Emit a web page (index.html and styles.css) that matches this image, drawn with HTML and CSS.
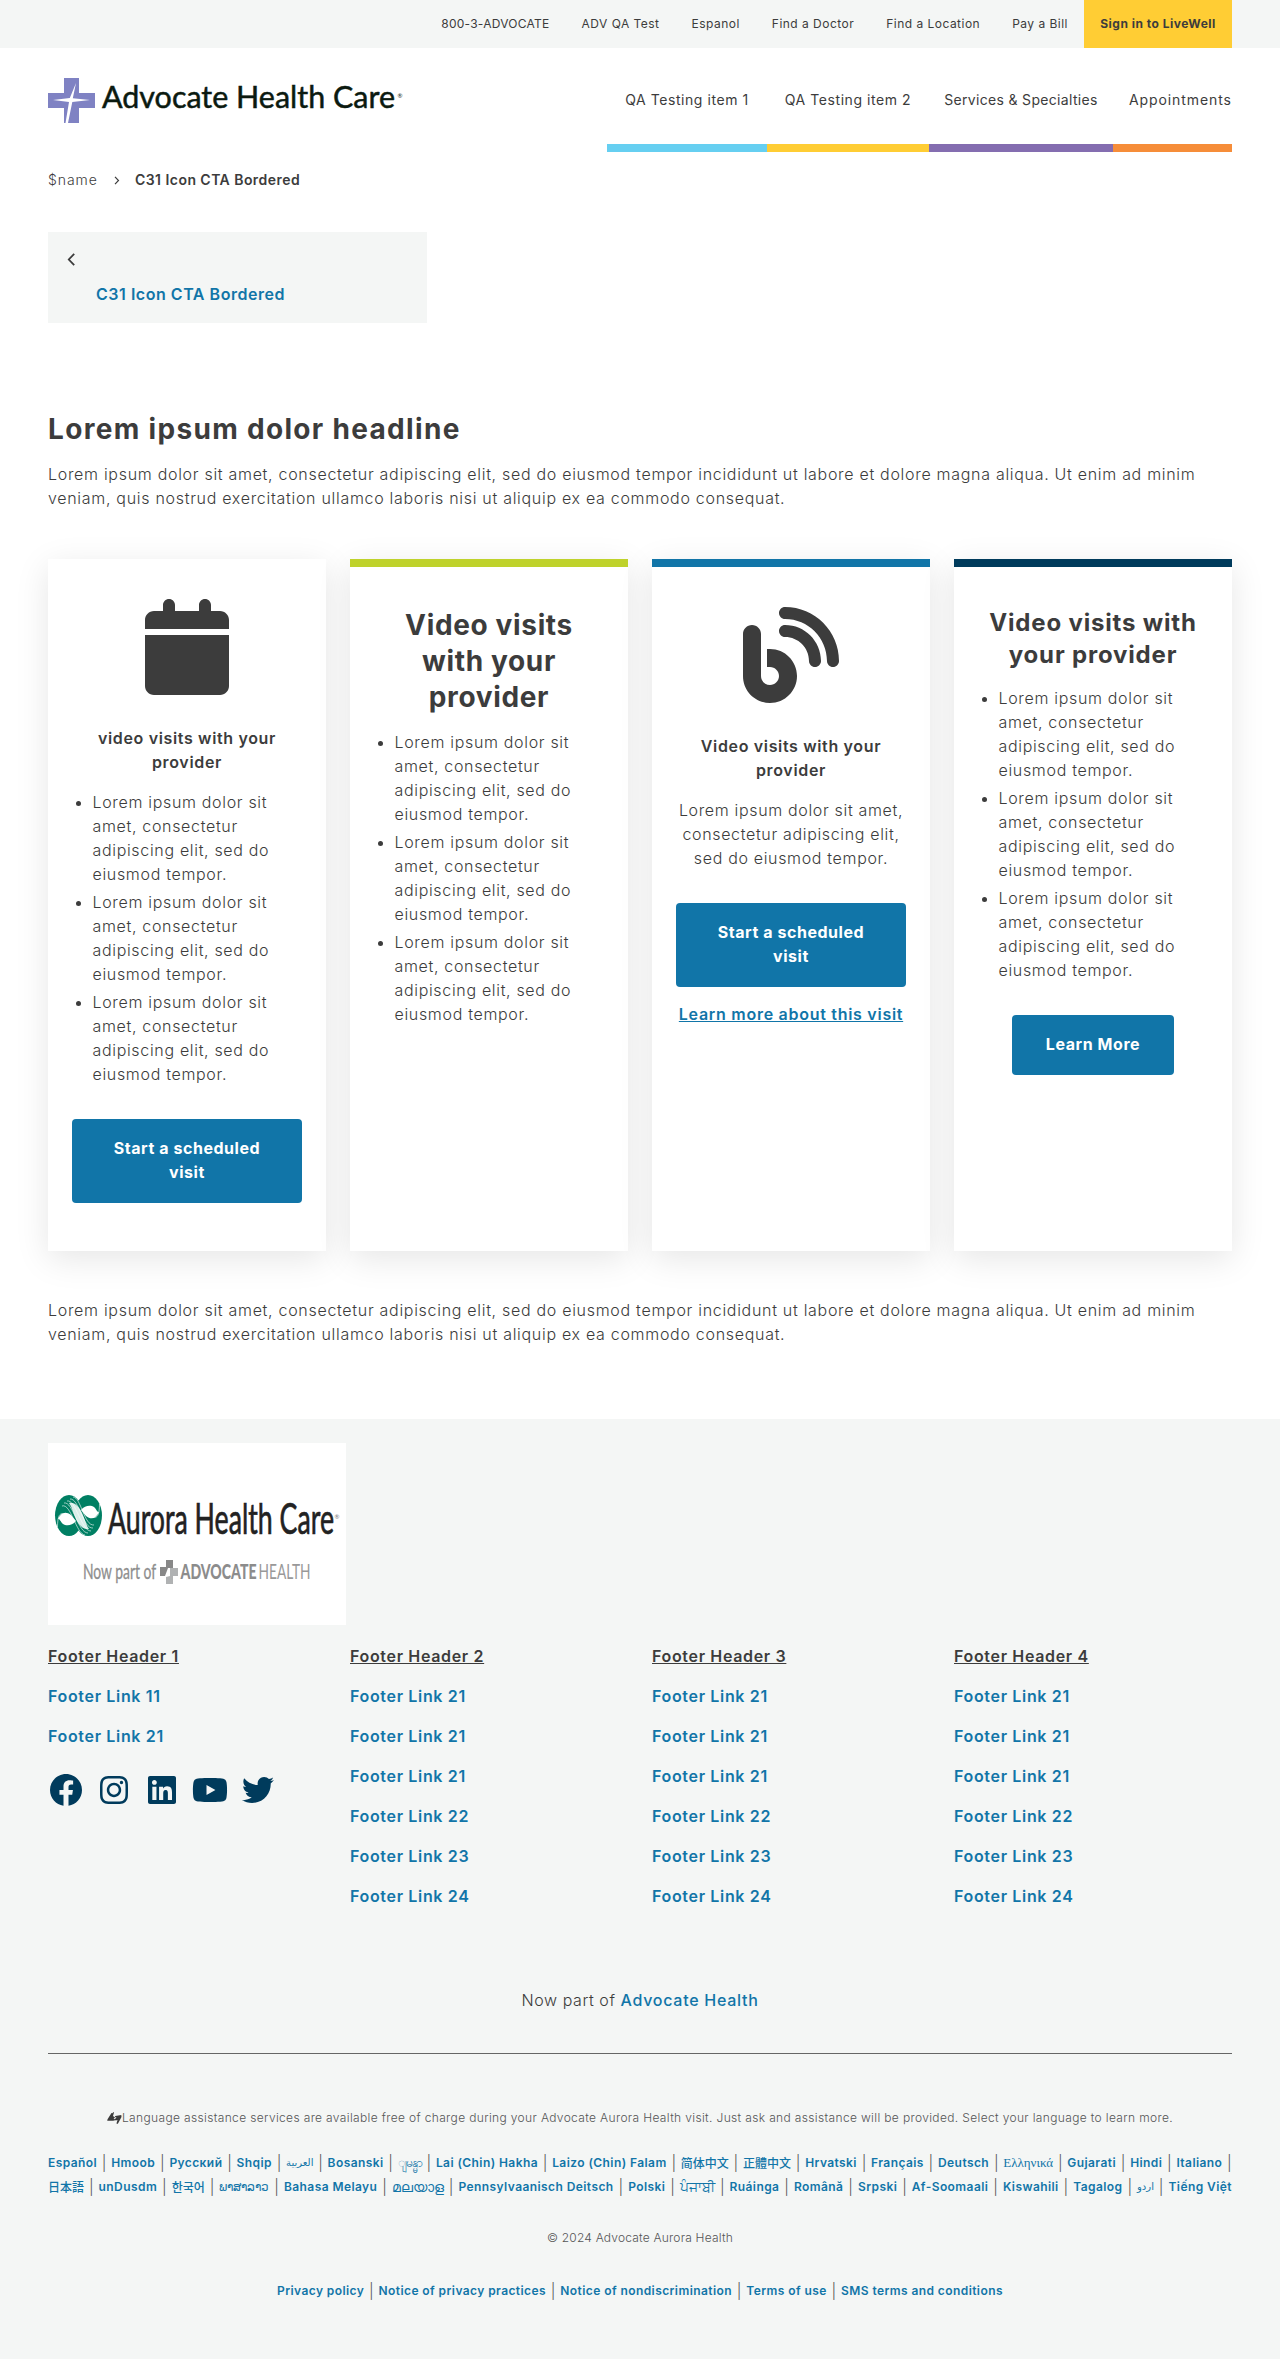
FILE: index.html
```
<!DOCTYPE html>
<html lang="en">
<head>
<meta charset="utf-8">
<title>C31 Icon CTA Bordered</title>
<link rel="stylesheet" href="styles.css">
</head>
<body>
<div class="topbar">
  <nav class="wrap topbar-links">
    <a class="phone">800-3-ADVOCATE</a><a class="wide">ADV QA Test</a><a class="wide">Espanol</a><a class="wide">Find a Doctor</a><a class="wide">Find a Location</a><a class="wide">Pay a Bill</a><a class="signin">Sign in to LiveWell</a>
  </nav>
</div>
<header class="wrap header">
  <svg class="logo" width="356" height="48" viewBox="0 0 356 48" role="img" aria-label="Advocate Health Care">
    <path fill="#7f82c3" d="M16 0h15v15h16v15H31v15H16V30H0V15h16z"/>
    <path fill="#fff" d="M28 5l-3.200 15.200L42 22l-17.700 2L20 45h-2.500l3.500-21L5 22l16.800-2z"/>
    <g fill="#0b1a10" font-family="Lato, sans-serif">
      <text x="54" y="30" font-size="31" stroke="#0b1a10" stroke-width=".5" textLength="293" lengthAdjust="spacingAndGlyphs">Advocate Health Care</text>
      <text x="349.500" y="20" font-size="6">®</text>
    </g>
  </svg>
  <nav class="mainnav">
    <a class="cyan">QA Testing item 1</a><a class="yellow">QA Testing item 2</a><a class="purple">Services &amp; Specialties</a><a class="orange">Appointments</a>
  </nav>
</header>
<main class="wrap">
  <div class="crumbs">
    <span>$name</span>
    <svg width="6" height="9" viewBox="0 0 6 9"><path d="M1 .8l3.500 3.700L1 8.200" fill="none" stroke="#3c3c3c" stroke-width="1.200"/></svg>
    <b>C31 Icon CTA Bordered</b>
  </div>
  <div class="sidenav">
    <svg width="9" height="13" viewBox="0 0 9 13"><path d="M7.200 .9L1.800 6.500l5.400 5.600" fill="none" stroke="#3c3c3c" stroke-width="1.800"/></svg>
    <a>C31 Icon CTA Bordered</a>
  </div>
  <h1>Lorem ipsum dolor headline</h1>
  <p class="intro">Lorem ipsum dolor sit amet, consectetur adipiscing elit, sed do eiusmod tempor incididunt ut labore et dolore magna aliqua. Ut enim ad minim veniam, quis nostrud exercitation ullamco laboris nisi ut aliquip ex ea commodo consequat.</p>
  <section class="cards">
    <article class="card">
      <svg class="card-icon" width="84" height="96" viewBox="0 0 448 512"><path d="M96 32V64H48C21.500 64 0 85.500 0 112v48H448V112c0-26.500-21.500-48-48-48H352V32c0-17.700-14.300-32-32-32s-32 14.300-32 32V64H160V32c0-17.700-14.300-32-32-32S96 14.300 96 32zM448 192H0V464c0 26.500 21.500 48 48 48H400c26.500 0 48-21.500 48-48V192z"/></svg>
      <h5>video visits with your provider</h5>
      <ul><li>Lorem ipsum dolor sit amet, consectetur adipiscing elit, sed do eiusmod tempor.</li><li>Lorem ipsum dolor sit amet, consectetur adipiscing elit, sed do eiusmod tempor.</li><li>Lorem ipsum dolor sit amet, consectetur adipiscing elit, sed do eiusmod tempor.</li></ul>
      <a class="btn">Start a scheduled visit</a>
    </article>
    <article class="card lime">
      <h2>Video visits with your provider</h2>
      <ul><li>Lorem ipsum dolor sit amet, consectetur adipiscing elit, sed do eiusmod tempor.</li><li>Lorem ipsum dolor sit amet, consectetur adipiscing elit, sed do eiusmod tempor.</li><li>Lorem ipsum dolor sit amet, consectetur adipiscing elit, sed do eiusmod tempor.</li></ul>
    </article>
    <article class="card blue">
      <svg class="card-icon" width="96" height="96" viewBox="0 0 512 512"><path d="M192 32c0 17.700 14.300 32 32 32c123.700 0 224 100.300 224 224c0 17.700 14.300 32 32 32s32-14.300 32-32C512 128.900 383.100 0 224 0c-17.700 0-32 14.300-32 32zm0 96c0 17.700 14.300 32 32 32c70.700 0 128 57.300 128 128c0 17.700 14.300 32 32 32s32-14.300 32-32c0-106-86-192-192-192c-17.700 0-32 14.300-32 32zM96 144c0-26.500-21.500-48-48-48S0 117.500 0 144V368c0 79.500 64.500 144 144 144s144-64.500 144-144s-64.500-144-144-144H128v96h16c26.500 0 48 21.500 48 48s-21.500 48-48 48s-48-21.500-48-48V144z"/></svg>
      <h5>Video visits with your provider</h5>
      <p>Lorem ipsum dolor sit amet, consectetur adipiscing elit, sed do eiusmod tempor.</p>
      <a class="btn">Start a scheduled visit</a>
      <a class="more">Learn more about this visit</a>
    </article>
    <article class="card navy">
      <h3>Video visits with your provider</h3>
      <ul><li>Lorem ipsum dolor sit amet, consectetur adipiscing elit, sed do eiusmod tempor.</li><li>Lorem ipsum dolor sit amet, consectetur adipiscing elit, sed do eiusmod tempor.</li><li>Lorem ipsum dolor sit amet, consectetur adipiscing elit, sed do eiusmod tempor.</li></ul>
      <a class="btn">Learn More</a>
    </article>
  </section>
  <p class="intro">Lorem ipsum dolor sit amet, consectetur adipiscing elit, sed do eiusmod tempor incididunt ut labore et dolore magna aliqua. Ut enim ad minim veniam, quis nostrud exercitation ullamco laboris nisi ut aliquip ex ea commodo consequat.</p>
</main>
<footer class="footer">
  <div class="wrap">
    <svg class="footer-logo" width="298" height="182" viewBox="0 0 298 182" role="img" aria-label="Aurora Health Care">
      <rect width="298" height="182" fill="#fff"/>
      <ellipse cx="21" cy="72.500" rx="14" ry="20.500" fill="#007f63"/>
      <ellipse cx="40" cy="72.500" rx="14" ry="20.500" fill="#007f63"/>
      <path fill="#fff" d="M10 76c3-7 8-8 13-4l5 6c-4 5-10 5-13 3-3-3-3-5-5-5z"/>
      <path fill="#fff" d="M51 69c-3 7-8 8-13 4l-5-6c4-5 10-5 13-3 3 3 3 5 5 5z"/>
      <path fill="#d9eee9" d="M21 60c6-1 10 4 13 10s4 12 7 16c-6 1-10-4-13-10s-4-12-7-16z"/>
      <g fill="none" stroke="#fff" stroke-width=".6">
        <path d="M16 60c9-2 14 30 24 30M19 58c9-2 14 30 24 30M22 56c9-1 13 30 23 29M25 54c8 0 11 29 21 28M14 63c9-3 14 28 23 29M9.500 84c0-14 4-15 8-12M51.500 61c0 14-4 15-8 12"/>
      </g>
      <g font-family="Lato, sans-serif">
        <text x="60" y="91" font-size="42" fill="#222" stroke="#222" stroke-width=".7" textLength="226" lengthAdjust="spacingAndGlyphs">Aurora Health Care</text>
        <text x="286.500" y="76" font-size="6" fill="#777">®</text>
        <text x="35" y="136" font-size="20.500" fill="#8e8e8e" stroke="#8e8e8e" stroke-width=".3" textLength="73" lengthAdjust="spacingAndGlyphs">Now part of</text>
        <text x="132.500" y="136" font-size="20.500" font-weight="900" fill="#8c8c8c" textLength="76" lengthAdjust="spacingAndGlyphs">ADVOCATE</text>
        <text x="210.500" y="136" font-size="20.500" fill="#999" textLength="52" lengthAdjust="spacingAndGlyphs">HEALTH</text>
      </g>
      <path fill="#888" d="M118 117h7v8h-5l-3 8h-5v-9h6z"/>
      <path fill="#b0b2b3" d="M122 125h8v8h-5v8h-7v-7l4-1z"/>
    </svg>
    <div class="footer-cols">
      <div>
        <h4>Footer Header 1</h4><a>Footer Link 11</a><a>Footer Link 21</a>
        <div class="social">
          <span><svg width="32" height="32" viewBox="8 8 496 496"><path d="M504 256C504 119 393 8 256 8S8 119 8 256c0 123.780 90.690 226.380 209.250 245V327.690h-63V256h63v-54.640c0-62.150 37-96.480 93.670-96.480 27.140 0 55.520 4.840 55.520 4.840v61h-31.280c-30.800 0-40.410 19.120-40.410 38.730V256h68.780l-11 71.690h-57.780V501C413.310 482.380 504 379.780 504 256z"/></svg></span>
          <span><svg width="28" height="32" viewBox="0 0 448 512"><path d="M224.100 141c-63.600 0-114.900 51.300-114.900 114.900s51.300 114.900 114.900 114.900S339 319.500 339 255.900 287.700 141 224.100 141zm0 189.600c-41.100 0-74.700-33.500-74.700-74.700s33.500-74.700 74.700-74.700 74.700 33.500 74.700 74.700-33.600 74.700-74.700 74.700zm146.400-194.300c0 14.900-12 26.800-26.800 26.800-14.900 0-26.800-12-26.800-26.800s12-26.800 26.800-26.800 26.800 12 26.800 26.800zm76.100 27.200c-1.700-35.900-9.900-67.700-36.200-93.900-26.200-26.200-58-34.400-93.900-36.200-37-2.100-147.900-2.100-184.900 0-35.800 1.700-67.600 9.900-93.900 36.100s-34.400 58-36.200 93.900c-2.100 37-2.100 147.900 0 184.900 1.700 35.900 9.900 67.700 36.200 93.900s58 34.400 93.900 36.200c37 2.100 147.900 2.100 184.900 0 35.900-1.700 67.700-9.900 93.900-36.200 26.200-26.200 34.400-58 36.200-93.900 2.100-37 2.100-147.800 0-184.800zM398.800 388c-7.800 19.600-22.900 34.700-42.600 42.600-29.500 11.700-99.500 9-132.100 9s-102.700 2.600-132.100-9c-19.600-7.800-34.700-22.900-42.600-42.600-11.700-29.500-9-99.500-9-132.100s-2.600-102.700 9-132.100c7.800-19.600 22.900-34.700 42.600-42.600 29.500-11.700 99.500-9 132.100-9s102.700-2.600 132.100 9c19.600 7.800 34.700 22.900 42.600 42.600 11.700 29.500 9 99.500 9 132.100s2.700 102.700-9 132.100z"/></svg></span>
          <span><svg width="28" height="32" viewBox="0 0 448 512"><path d="M416 32H31.900C14.300 32 0 46.500 0 64.300v383.400C0 465.500 14.300 480 31.900 480H416c17.600 0 32-14.500 32-32.300V64.300c0-17.800-14.400-32.300-32-32.300zM135.400 416H69V202.200h66.500V416zm-33.200-243c-21.300 0-38.500-17.300-38.500-38.500S80.900 96 102.200 96c21.200 0 38.500 17.300 38.500 38.500 0 21.300-17.200 38.500-38.500 38.500zm282.100 243h-66.400V312c0-24.800-.5-56.700-34.500-56.700-34.600 0-39.900 27-39.900 54.900V416h-66.400V202.200h63.700v29.200h.9c8.900-16.800 30.600-34.500 62.900-34.500 67.200 0 79.700 44.300 79.700 101.900V416z"/></svg></span>
          <span><svg width="36" height="32" viewBox="0 0 576 512"><path d="M549.655 124.083c-6.281-23.650-24.787-42.276-48.284-48.597C458.781 64 288 64 288 64S117.220 64 74.629 75.486c-23.497 6.322-42.003 24.947-48.284 48.597-11.412 42.867-11.412 132.305-11.412 132.305s0 89.438 11.412 132.305c6.281 23.650 24.787 41.500 48.284 47.821C117.220 448 288 448 288 448s170.780 0 213.371-11.486c23.497-6.321 42.003-24.171 48.284-47.821 11.412-42.867 11.412-132.305 11.412-132.305s0-89.438-11.412-132.305zm-317.510 213.508V175.185l142.739 81.205-142.739 81.201z"/></svg></span>
          <span><svg width="32" height="32" viewBox="0 0 512 512"><path d="M459.370 151.716c.325 4.548.325 9.097.325 13.645 0 138.720-105.583 298.558-298.558 298.558-59.452 0-114.680-17.219-161.137-47.106 8.447.974 16.568 1.299 25.340 1.299 49.055 0 94.213-16.568 130.274-44.832-46.132-.975-84.792-31.188-98.112-72.772 6.498.974 12.995 1.624 19.818 1.624 9.421 0 18.843-1.300 27.614-3.573-48.081-9.747-84.143-51.980-84.143-102.985v-1.299c13.969 7.797 30.214 12.670 47.431 13.319-28.264-18.843-46.781-51.005-46.781-87.391 0-19.492 5.197-37.360 14.294-52.954 51.655 63.675 129.300 105.258 216.365 109.807-1.624-7.797-2.599-15.918-2.599-24.040 0-57.828 46.782-104.934 104.934-104.934 30.213 0 57.502 12.670 76.670 33.137 23.715-4.548 46.456-13.320 66.599-25.340-7.798 24.366-24.366 44.833-46.132 57.827 21.117-2.273 41.584-8.122 60.426-16.243-14.292 20.791-32.161 39.308-52.628 54.253z"/></svg></span>
        </div>
      </div>
      <div><h4>Footer Header 2</h4><a>Footer Link 21</a><a>Footer Link 21</a><a>Footer Link 21</a><a>Footer Link 22</a><a>Footer Link 23</a><a>Footer Link 24</a></div>
      <div><h4>Footer Header 3</h4><a>Footer Link 21</a><a>Footer Link 21</a><a>Footer Link 21</a><a>Footer Link 22</a><a>Footer Link 23</a><a>Footer Link 24</a></div>
      <div><h4>Footer Header 4</h4><a>Footer Link 21</a><a>Footer Link 21</a><a>Footer Link 21</a><a>Footer Link 22</a><a>Footer Link 23</a><a>Footer Link 24</a></div>
    </div>
    <p class="part">Now part of <a>Advocate Health</a></p>
    <p class="assist"><svg width="15" height="12" viewBox="0 0 15 12"><path fill="#3c3c3c" d="M1 6.500L4.500 1l.8.300L6.500 0l.5.600L6 4l2 1.500L6.500 7l2 .3-.4.900-2 .6H1.200L0 8.500zM14.500 5L11 11.500l-1 .5-.5-.8L10.500 8l-2 .5L8 7l1.500-1.500L7.800 5l.5-1 6-1z"/></svg>Language assistance services are available free of charge during your Advocate Aurora Health visit. Just ask and assistance will be provided. Select your language to learn more.</p>
    <div class="langs">
      <a>Español</a><i>|</i><a>Hmoob</a><i>|</i><a>Русский</a><i>|</i><a>Shqip</a><i>|</i><a class="arabic">العربية</a><i>|</i><a>Bosanski</a><i>|</i><a class="script">ျမန္မာ</a><i>|</i><a>Lai (Chin) Hakha</a><i>|</i><a>Laizo (Chin) Falam</a><i>|</i><a class="cjk" lang="zh-Hans">简体中文</a><i>|</i><a class="cjk" lang="zh-Hant">正體中文</a><i>|</i><a>Hrvatski</a><i>|</i><a>Français</a><i>|</i><a>Deutsch</a><i>|</i><a class="greek">Ελληνικά</a><i>|</i><a>Gujarati</a><i>|</i><a>Hindi</a><i>|</i><a>Italiano</a><i>|</i>
    </div>
    <div class="langs">
      <a class="cjk" lang="ja">日本語</a><i>|</i><a>unDusdm</a><i>|</i><a class="cjk" lang="ko">한국어</a><i>|</i><a class="script">ພາສາລາວ</a><i>|</i><a>Bahasa Melayu</a><i>|</i><a class="script big">മലയാള</a><i>|</i><a>Pennsylvaanisch Deitsch</a><i>|</i><a>Polski</a><i>|</i><a class="script big">ਪੰਜਾਬੀ</a><i>|</i><a>Ruáinga</a><i>|</i><a>Română</a><i>|</i><a>Srpski</a><i>|</i><a>Af-Soomaali</a><i>|</i><a>Kiswahili</a><i>|</i><a>Tagalog</a><i>|</i><a class="arabic">اردو</a><i>|</i><a>Tiếng Việt</a>
    </div>
    <p class="copy">© 2024 Advocate Aurora Health</p>
    <div class="langs legal">
      <a>Privacy policy</a><i>|</i><a>Notice of privacy practices</a><i>|</i><a>Notice of nondiscrimination</a><i>|</i><a>Terms of use</a><i>|</i><a>SMS terms and conditions</a>
    </div>
  </div>
</footer>
</body>
</html>
```
FILE: styles.css
```
* { box-sizing: border-box; }
body { margin: 0; background: #fff; color: #3c3c3c; font: 300 16px/24px Inter, "Noto Sans", sans-serif; letter-spacing: .67px; }
h1, h2, h3, h4, h5, p, ul { margin: 0; padding: 0; }
svg { display: block; flex: none; letter-spacing: 0; font-weight: 400; }
.wrap { width: 1184px; margin: 0 auto; }

.topbar { height: 48px; background: #f4f6f5; }
.topbar-links { display: flex; justify-content: flex-end; gap: 32px; font-size: 12px; font-weight: 400; line-height: 48px; }
.topbar-links a { white-space: nowrap; }
.topbar-links .phone { letter-spacing: .25px; }
.topbar-links .wide { letter-spacing: .48px; }
.topbar-links .signin { width: 148px; margin-left: -16px; background: #ffcd34; font-weight: 700; letter-spacing: .5px; text-align: center; }

.header { display: flex; justify-content: space-between; height: 104px; }
.logo { margin-top: 30px; }
.mainnav { display: flex; font-size: 14px; font-weight: 400; line-height: 104px; letter-spacing: .56px; }
.mainnav a { height: 104px; border-bottom: 8px solid; white-space: nowrap; text-align: center; }
.mainnav .cyan { width: 160px; border-color: #66cff1; }
.mainnav .yellow { width: 162px; border-color: #ffcd34; }
.mainnav .purple { width: 184px; border-color: #846db0; letter-spacing: .32px; }
.mainnav .orange { width: 119px; border-color: #f68d39; padding-left: 16px; text-align: left; letter-spacing: .9px; }

.crumbs { display: flex; align-items: center; height: 56px; font-size: 14px; }
.crumbs span { width: 66px; letter-spacing: .95px; }
.crumbs b { margin-left: 15px; font-weight: 600; letter-spacing: .45px; }

.sidenav { width: 379px; height: 91px; margin-top: 24px; padding: 21px 19px; background: #f4f6f5; }
.sidenav a { display: block; margin: 16px 0 0 29px; color: #1175a8; font-weight: 600; letter-spacing: .53px; }

h1 { margin: 88px 0 15px; font-size: 28px; font-weight: 700; line-height: 36px; letter-spacing: 1.32px; }
.intro { letter-spacing: .7px; }
.intro + .cards { margin: 49px 0 47px; }

.cards { display: grid; grid-template-columns: repeat(4, 278px); gap: 24px; }
.card { padding: 40px 24px 48px; background: #fff; box-shadow: 0 8px 32px rgba(0, 0, 0, .1); text-align: center; }
.card.lime { border-top: 8px solid #bfd22b; }
.card.blue { border-top: 8px solid #1175a8; }
.card.navy { border-top: 8px solid #003b5c; }
.card-icon { margin: 0 auto 31px; fill: #3c3c3c; }
.card h5 { margin-bottom: 16px; font-size: 16px; font-weight: 600; letter-spacing: .65px; }
.card h2 { margin-bottom: 15px; font-size: 28px; font-weight: 700; line-height: 36px; letter-spacing: .65px; }
.card h3 { margin-bottom: 15px; font-size: 24px; font-weight: 700; line-height: 32px; letter-spacing: .82px; }
.card ul { padding: 0 0 1px 20.5px; text-align: left; }
.card li + li { margin-top: 4px; }
.card p { padding-bottom: 1px; letter-spacing: .66px; }
.btn { display: block; width: fit-content; margin: 32px auto 0; padding: 17px 34px 19px; border-radius: 4px; background: #1175a8; color: #fff; font-weight: 700; letter-spacing: .55px; }
.more { display: block; margin: 15px -3px 0; color: #1175a8; font-weight: 600; letter-spacing: .72px; text-decoration: underline; white-space: nowrap; }

.footer { height: 940px; margin-top: 73px; padding-top: 24px; background: #f4f6f5; }
.footer-cols { display: grid; grid-template-columns: repeat(4, 278px); gap: 24px; height: 280px; margin-top: 19px; }
.footer-cols h4, .footer-cols a { display: block; margin-bottom: 16px; font-size: 16px; font-weight: 600; letter-spacing: .66px; }
.footer-cols h4 { text-decoration: underline; }
.footer-cols a { color: #1175a8; }
.social { display: flex; gap: 12px; padding-top: 10px; }
.social span { display: flex; justify-content: center; width: 36px; }
.social svg { fill: #003b5c; }
.part { height: 65.500px; margin-top: 64px; border-bottom: 1px solid #666; text-align: center; letter-spacing: .57px; }
.part a { color: #1175a8; font-weight: 500; letter-spacing: .72px; }
.assist { display: flex; justify-content: center; align-items: center; margin: 52px 0 21px; color: #555; font-size: 12px; letter-spacing: .35px; white-space: nowrap; }
.langs { display: flex; justify-content: space-between; height: 24px; color: #1175a8; font-size: 12px; font-weight: 600; letter-spacing: .42px; white-space: nowrap; }
.langs i { color: #555; font-size: 15px; font-style: normal; font-weight: 300; letter-spacing: 0; }
.langs .cjk { font-family: "Noto Sans CJK SC", sans-serif; font-weight: 500; letter-spacing: 0; }
.langs .cjk:lang(zh-Hant) { font-family: "Noto Sans CJK TC", sans-serif; }
.langs .cjk:lang(ja) { font-family: "Noto Sans CJK JP", sans-serif; }
.langs .cjk:lang(ko) { font-family: "Noto Sans CJK KR", sans-serif; }
.langs .arabic { font-family: "DejaVu Sans", sans-serif; font-size: 10px; font-weight: 400; letter-spacing: 0; }
.langs .script { font-family: "Noto Sans", sans-serif; font-weight: 400; letter-spacing: 0; }
.langs .big { font-size: 14px; }
.langs .greek { font-family: "Liberation Serif", serif; font-size: 13px; font-weight: 400; letter-spacing: 0; }
.copy { margin: 27px 0 29px; color: #555; font-size: 12px; letter-spacing: .2px; text-align: center; }
.langs.legal { width: 726px; margin: 0 auto; }
```
